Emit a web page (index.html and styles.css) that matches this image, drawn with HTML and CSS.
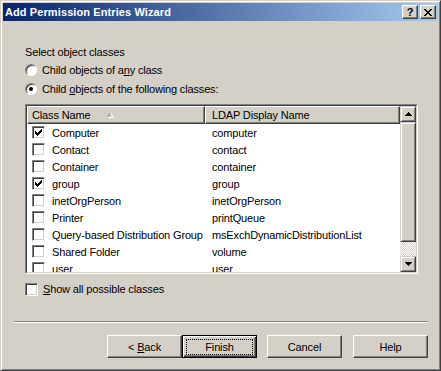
FILE: index.html
```html
<!DOCTYPE html>
<html lang="en">
<head>
    <meta charset="UTF-8">
    <title>Add Permission Entries Wizard</title>
    <link rel="stylesheet" href="styles.css">
</head>
<body>
    <div class="window">
        <!-- Title bar -->
        <div class="titlebar">
            <span class="title">Add Permission Entries Wizard</span>
            <div class="caption-btns">
                <div class="cap cap-help">?</div>
                <div class="cap">
                    <svg width="8" height="7" viewBox="0 0 8 7"><path d="M0 0h2v1h-2zM6 0h2v1h-2zM1 1h2v1h-2zM5 1h2v1h-2zM2 2h4v1h-4zM3 3h2v1h-2zM2 4h4v1h-4zM1 5h2v1h-2zM5 5h2v1h-2zM0 6h2v1h-2zM6 6h2v1h-2z" fill="#000"/></svg>
                </div>
            </div>
        </div>

        <div class="content">
            <div class="label">Select object classes</div>
            <div class="radio-row"><span class="radio"></span><span>Child objects of a<u>n</u>y class</span></div>
            <div class="radio-row"><span class="radio checked"></span><span>Child <u>o</u>bjects of the following classes:</span></div>

            <!-- Class list -->
            <div class="listview">
                <div class="lv-inner">
                    <div class="lv-main">
                        <div class="lv-header">
                            <div class="col col-name"><span>Class Name</span>
                                <svg class="sort" width="7" height="6" viewBox="0 0 7 6">
                                    <path d="M0.5 5.5 L3.5 0.5" stroke="#808080" fill="none"/>
                                    <path d="M3.5 0.5 L6.5 5.5 L0.5 5.5" stroke="#fff" fill="none"/>
                                </svg>
                            </div>
                            <div class="col col-ldap">LDAP Display Name</div>
                        </div>
                        <div class="lv-rows">
                            <div class="row"><div class="cell-name"><span class="check checked"></span><span>Computer</span></div><div class="cell-ldap">computer</div></div>
                            <div class="row"><div class="cell-name"><span class="check"></span><span>Contact</span></div><div class="cell-ldap">contact</div></div>
                            <div class="row"><div class="cell-name"><span class="check"></span><span>Container</span></div><div class="cell-ldap">container</div></div>
                            <div class="row"><div class="cell-name"><span class="check checked"></span><span>group</span></div><div class="cell-ldap">group</div></div>
                            <div class="row"><div class="cell-name"><span class="check"></span><span>inetOrgPerson</span></div><div class="cell-ldap">inetOrgPerson</div></div>
                            <div class="row"><div class="cell-name"><span class="check"></span><span>Printer</span></div><div class="cell-ldap">printQueue</div></div>
                            <div class="row"><div class="cell-name"><span class="check"></span><span>Query-based Distribution Group</span></div><div class="cell-ldap">msExchDynamicDistributionList</div></div>
                            <div class="row"><div class="cell-name"><span class="check"></span><span>Shared Folder</span></div><div class="cell-ldap">volume</div></div>
                            <div class="row"><div class="cell-name"><span class="check"></span><span>user</span></div><div class="cell-ldap">user</div></div>
                        </div>
                    </div>
                    <div class="scrollbar">
                        <div class="sb-btn">
                            <svg width="7" height="4" viewBox="0 0 7 4"><path d="M3 0h1v1h-1zM2 1h3v1h-3zM1 2h5v1h-5zM0 3h7v1h-7z" fill="#000"/></svg>
                        </div>
                        <div class="sb-thumb"></div>
                        <div class="sb-track"></div>
                        <div class="sb-btn">
                            <svg width="7" height="4" viewBox="0 0 7 4"><path d="M0 0h7v1h-7zM1 1h5v1h-5zM2 2h3v1h-3zM3 3h1v1h-1z" fill="#000"/></svg>
                        </div>
                    </div>
                </div>
            </div>

            <div class="show-all"><span class="check"></span><span><u>S</u>how all possible classes</span></div>

            <div class="separator"></div>

            <div class="buttons">
                <button class="btn btn-back"><span>&lt; <u>B</u>ack</span></button>
                <button class="btn btn-default"><span class="focus">Finish</span></button>
                <button class="btn btn-cancel">Cancel</button>
                <button class="btn">Help</button>
            </div>
        </div>
    </div>
</body>
</html>
```

FILE: styles.css
```css
body {
    margin: 0;
    font-family: "Liberation Sans", Arial, sans-serif;
    font-size: 11px;
    letter-spacing: -0.15px;
    color: #000;
    background-color: #d4d0c8;
}
.window {
    width: 441px;
    height: 371px;
    box-sizing: border-box;
    background-color: #d4d0c8;
    border: 1px solid;
    border-color: #d4d0c8 #404040 #404040 #d4d0c8;
    box-shadow: inset 1px 1px #fff, inset -1px -1px #808080;
    padding: 2px;
    display: flex;
    flex-direction: column;
}
.titlebar {
    height: 18px;
    flex: none;
    display: flex;
    align-items: center;
    padding: 0 2px;
    background: linear-gradient(to right, #0a246a, #a6caf0);
}
.title {
    flex: 1;
    color: white;
    font-weight: bold;
    letter-spacing: 0.1px;
    line-height: 18px;
}
.caption-btns {
    display: flex;
    gap: 2px;
}
.cap {
    width: 16px;
    height: 14px;
    box-sizing: border-box;
    background-color: #d4d0c8;
    border: 1px solid;
    border-color: #fff #404040 #404040 #fff;
    box-shadow: inset -1px -1px #808080;
    display: flex;
    align-items: center;
    justify-content: center;
}
.cap-help {
    font-weight: bold;
    font-size: 11px;
    line-height: 12px;
}
.content {
    flex: 1;
    display: flex;
    flex-direction: column;
    padding: 25px 10px 0 11px;
}
.label {
    line-height: 13px;
    margin-left: 11px;
}
.radio-row {
    display: flex;
    line-height: 13px;
    margin: 5px 0 0 11px;
}
.radio-row + .radio-row {
    margin-top: 6px;
}
.radio {
    width: 12px;
    height: 12px;
    box-sizing: border-box;
    flex: none;
    border-radius: 50%;
    background-color: #fff;
    border: 1px solid;
    border-color: #808080 #fff #fff #808080;
    box-shadow: inset 1px 1px #404040;
    margin-right: 5px;
    display: flex;
    align-items: center;
    justify-content: center;
}
.radio.checked::after {
    content: "";
    width: 4px;
    height: 4px;
    border-radius: 50%;
    background-color: #000;
}
.listview {
    height: 170px;
    box-sizing: border-box;
    margin: 8px 10px 0 11px;
    border: 1px solid;
    border-color: #808080 #fff #fff #808080;
    display: flex;
}
.lv-inner {
    flex: 1;
    display: flex;
    border: 1px solid;
    border-color: #404040 #d4d0c8 #d4d0c8 #404040;
    background-color: #fff;
    overflow: hidden;
}
.lv-main {
    flex: 1;
    display: flex;
    flex-direction: column;
    overflow: hidden;
}
.lv-header {
    display: flex;
    flex: none;
    height: 18px;
}
.col {
    box-sizing: border-box;
    height: 18px;
    background-color: #d4d0c8;
    border: 1px solid;
    border-color: #fff #404040 #404040 #fff;
    box-shadow: inset -1px -1px #808080;
    display: flex;
    align-items: center;
}
.col-name {
    width: 178px;
    padding-left: 4px;
}
.col-ldap {
    flex: 1;
    padding-left: 6px;
}
.sort {
    margin-left: 17px;
    margin-top: -1px;
}
.lv-rows {
    overflow: hidden;
}
.row {
    display: flex;
    height: 17px;
    align-items: center;
    white-space: nowrap;
}
.cell-name {
    width: 178px;
    box-sizing: border-box;
    padding-left: 5px;
    display: flex;
    align-items: center;
}
.cell-ldap {
    padding-left: 7px;
}
.check {
    width: 13px;
    height: 13px;
    box-sizing: border-box;
    flex: none;
    background-color: #fff;
    border: 1px solid;
    border-color: #808080 #fff #fff #808080;
    box-shadow: inset 1px 1px #404040, inset -1px -1px #d4d0c8;
    margin-right: 7px;
}
.check.checked {
    background-image: url("data:image/svg+xml,%3Csvg xmlns='http://www.w3.org/2000/svg' width='7' height='7'%3E%3Cpath d='M6 0h1v1h-1zM5 1h2v1h-2zM0 2h1v1h-1zM4 2h3v1h-3zM0 3h2v1h-2zM3 3h3v1h-3zM0 4h5v1h-5zM1 5h3v1h-3zM2 6h1v1h-1z' fill='black'/%3E%3C/svg%3E");
    background-repeat: no-repeat;
    background-position: 2px 2px;
}
.scrollbar {
    width: 16px;
    flex: none;
    display: flex;
    flex-direction: column;
}
.sb-btn, .sb-thumb {
    box-sizing: border-box;
    background-color: #d4d0c8;
    border: 1px solid;
    border-color: #d4d0c8 #404040 #404040 #d4d0c8;
    box-shadow: inset 1px 1px #fff, inset -1px -1px #808080;
}
.sb-btn {
    height: 16px;
    flex: none;
    display: flex;
    align-items: center;
    justify-content: center;
}
.sb-thumb {
    height: 120px;
    flex: none;
}
.sb-track {
    flex: 1;
    background: repeating-conic-gradient(#d4d0c8 0 25%, #fff 0 50%) 0 0 / 2px 2px;
}
.show-all {
    display: flex;
    align-items: center;
    line-height: 13px;
    margin: 9px 0 0 11px;
}
.show-all .check {
    margin-right: 5px;
}
.separator {
    margin-top: 25px;
    border-top: 1px solid #808080;
    border-bottom: 1px solid #fff;
}
.buttons {
    display: flex;
    justify-content: flex-end;
    margin-top: 12px;
}
.btn {
    width: 75px;
    height: 23px;
    box-sizing: border-box;
    font: inherit;
    letter-spacing: inherit;
    color: #000;
    background-color: #d4d0c8;
    border: 1px solid;
    border-color: #fff #404040 #404040 #fff;
    box-shadow: inset -1px -1px #808080;
    padding: 0;
    display: flex;
    align-items: center;
    justify-content: center;
}
.btn-default {
    border-color: #000;
    box-shadow: inset 1px 1px #fff, inset -1px -1px #404040, inset -2px -2px #808080;
    margin-right: 10px;
}
.btn-cancel {
    margin-right: 11px;
}
.focus {
    width: 67px;
    height: 16px;
    box-sizing: border-box;
    border: 1px dotted #000;
    display: flex;
    align-items: center;
    justify-content: center;
}
```
